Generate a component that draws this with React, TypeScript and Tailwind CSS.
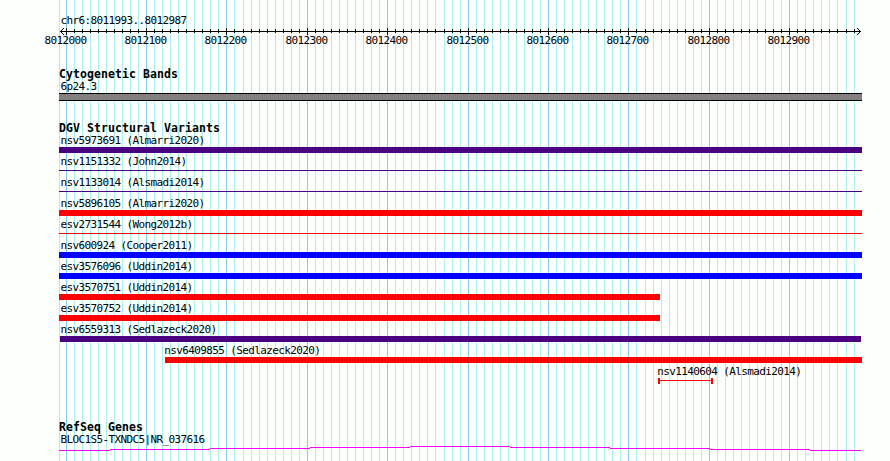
import React from "react";

interface Variant {
  name: string;
  offset: string;
  width: string;
  color: string;
  shape: "bar" | "line" | "range";
}

const variants: Variant[] = [
  { name: "nsv5973691 (Almarri2020)", offset: "ml-0", width: "w-[803px]", color: "bg-[#4b0082]", shape: "bar" },
  { name: "nsv1151332 (John2014)", offset: "ml-0", width: "w-[803px]", color: "bg-[#4b0082]", shape: "line" },
  { name: "nsv1133014 (Alsmadi2014)", offset: "ml-0", width: "w-[803px]", color: "bg-[#4b0082]", shape: "line" },
  { name: "nsv5896105 (Almarri2020)", offset: "ml-0", width: "w-[803px]", color: "bg-[#ff0000]", shape: "bar" },
  { name: "esv2731544 (Wong2012b)", offset: "ml-0", width: "w-[803px]", color: "bg-[#ff0000]", shape: "line" },
  { name: "nsv600924 (Cooper2011)", offset: "ml-0", width: "w-[803px]", color: "bg-[#0000ff]", shape: "bar" },
  { name: "esv3576096 (Uddin2014)", offset: "ml-0", width: "w-[803px]", color: "bg-[#0000ff]", shape: "bar" },
  { name: "esv3570751 (Uddin2014)", offset: "ml-0", width: "w-[601px]", color: "bg-[#ff0000]", shape: "bar" },
  { name: "esv3570752 (Uddin2014)", offset: "ml-0", width: "w-[601px]", color: "bg-[#ff0000]", shape: "bar" },
  { name: "nsv6559313 (Sedlazeck2020)", offset: "ml-px", width: "w-[801px]", color: "bg-[#4b0082]", shape: "bar" },
  { name: "nsv6409855 (Sedlazeck2020)", offset: "ml-[106px]", width: "w-[697px]", color: "bg-[#ff0000]", shape: "bar" },
  { name: "nsv1140604 (Alsmadi2014)", offset: "ml-[599px]", width: "w-[55px]", color: "bg-[#ff0000]", shape: "range" },
];

// One tick every 10 bp, a major one every 100 bp
const ticks = Array.from({ length: 99 }, (_, i) => ({
  x: Math.floor(66.15 + i * 8.04),
  major: i % 10 === 0,
  position: 8012000 + i * 10,
}));

const labelClass = "text-[11px] tracking-[-0.622px] whitespace-pre";

function Grid() {
  return (
    <svg className="absolute inset-0" width="890" height="461" shapeRendering="crispEdges">
      <rect x={59} y={0} width={1} height={461} fill="#afeeee" />
      {ticks.map((tick) => (
        <rect key={tick.x} x={tick.x} y={0} width={1} height={461} fill={tick.major ? "#87ceeb" : "#afeeee"} />
      ))}
    </svg>
  );
}

function Ruler() {
  return (
    <svg
      className="block h-[34px] w-[890px] shrink-0 font-[DejaVu_Sans_Mono,monospace]"
      viewBox="0 27 890 34"
      shapeRendering="crispEdges"
    >
      <rect x={60} y={31} width={801} height={1} />
      {ticks.map((tick) => (
        <rect key={tick.x} x={tick.x} y={tick.major ? 28 : 29} width={1} height={tick.major ? 7 : 4} />
      ))}
      {/* arrow heads */}
      {[1, 2, 3].map((d) => (
        <React.Fragment key={d}>
          <rect x={60 + d} y={31 - d} width={1} height={1} />
          <rect x={60 + d} y={31 + d} width={1} height={1} />
          <rect x={860 - d} y={31 - d} width={1} height={1} />
          <rect x={860 - d} y={31 + d} width={1} height={1} />
        </React.Fragment>
      ))}
      {ticks
        .filter((tick) => tick.major)
        .map((tick) => (
          <text key={tick.x} x={tick.x - 21.6} y={44} className="text-[11px] tracking-[-0.622px]">
            {tick.position}
          </text>
        ))}
    </svg>
  );
}

function TrackTitle({ children }: { children: React.ReactNode }) {
  return (
    <h2 className="h-3 text-[11.5px] leading-3 font-bold tracking-[0.077px] whitespace-pre">{children}</h2>
  );
}

function Glyph({ variant }: { variant: Variant }) {
  if (variant.shape === "line") {
    return (
      <div className="h-1.5 pt-0.5">
        <div className={`h-px ${variant.width} ${variant.color}`} />
      </div>
    );
  }
  if (variant.shape === "range") {
    return (
      <div className={`flex h-1.5 ${variant.width}`}>
        <div className={`w-0.5 ${variant.color}`} />
        <div className={`mt-0.5 h-px flex-1 ${variant.color}`} />
        <div className={`w-0.5 ${variant.color}`} />
      </div>
    );
  }
  return <div className={`h-1.5 ${variant.width} ${variant.color}`} />;
}

export default function App() {
  return (
    <main className="relative h-[461px] w-[890px] overflow-hidden bg-[#fdfffc] font-[DejaVu_Sans_Mono,monospace] text-black">
      <Grid />
      <div className="relative flex flex-col">
        <header className={`h-[27px] pt-[15px] pl-[60.4px] leading-3 ${labelClass}`}>chr6:8011993..8012987</header>
        <Ruler />

        <div className="pl-[59px]">
          <section className="pt-[7px]">
            <TrackTitle>Cytogenetic Bands</TrackTitle>
            <div className={`h-[13px] pl-[1.4px] leading-[13px] ${labelClass}`}>6p24.3</div>
            <div className="h-2 w-[803px] border-y border-black bg-[#848082]" />
          </section>

          <section className="pt-[21px]">
            <TrackTitle>DGV Structural Variants</TrackTitle>
            {variants.map((variant) => (
              <div key={variant.name} className={`h-[21px] ${variant.offset}`}>
                <div
                  className={`h-[13px] leading-[13px] ${labelClass} ${variant.offset === "ml-0" ? "pl-[1.4px]" : variant.offset === "ml-px" ? "pl-[0.4px]" : "-ml-[0.7px]"}`}
                >
                  {variant.name}
                </div>
                <Glyph variant={variant} />
              </div>
            ))}
          </section>

          <section className="pt-[35px]">
            <TrackTitle>RefSeq Genes</TrackTitle>
            <div className={`h-[13px] pl-[1.4px] leading-[13px] ${labelClass}`}>BLOC1S5-TXNDC5|NR_037616</div>
            <svg className="block" width="803" height="15" shapeRendering="crispEdges" fill="#ff00ff">
              <rect x={0} y={4} width={51} height={1} />
              <rect x={51} y={3} width={100} height={1} />
              <rect x={151} y={2} width={100} height={1} />
              <rect x={251} y={1} width={100} height={1} />
              <rect x={351} y={0} width={100} height={1} />
              <rect x={451} y={1} width={100} height={1} />
              <rect x={551} y={2} width={100} height={1} />
              <rect x={651} y={3} width={100} height={1} />
              <rect x={751} y={4} width={51} height={1} />
            </svg>
          </section>
        </div>
      </div>
    </main>
  );
}
